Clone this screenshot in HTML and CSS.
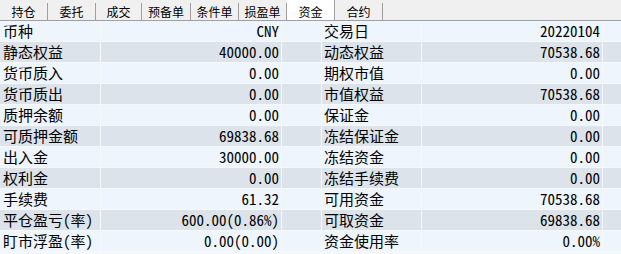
FILE: index.html
```html
<!DOCTYPE html>
<html lang="zh-CN">
<head>
<meta charset="UTF-8">
<title>资金</title>
<link rel="stylesheet" href="styles.css">
</head>
<body>

<!-- Tabs -->
<div class="tabs">
  <div class="tab">持仓</div>
  <div class="tab">委托</div>
  <div class="tab narrow">成交</div>
  <div class="tab wide">预备单</div>
  <div class="tab">条件单</div>
  <div class="tab">损盈单</div>
  <div class="tab active">资金</div>
  <div class="tab">合约</div>
</div>

<!-- Fund table -->
<div class="grid">
  <div class="row"><div class="lbl">币种</div><div class="val">CNY</div><div class="gap"></div><div class="lbl">交易日</div><div class="val">20220104</div><div class="rest"></div></div>
  <div class="row"><div class="lbl">静态权益</div><div class="val">40000.00</div><div class="gap"></div><div class="lbl">动态权益</div><div class="val">70538.68</div><div class="rest"></div></div>
  <div class="row"><div class="lbl">货币质入</div><div class="val">0.00</div><div class="gap"></div><div class="lbl">期权市值</div><div class="val">0.00</div><div class="rest"></div></div>
  <div class="row"><div class="lbl">货币质出</div><div class="val">0.00</div><div class="gap"></div><div class="lbl">市值权益</div><div class="val">70538.68</div><div class="rest"></div></div>
  <div class="row"><div class="lbl">质押余额</div><div class="val">0.00</div><div class="gap"></div><div class="lbl">保证金</div><div class="val">0.00</div><div class="rest"></div></div>
  <div class="row"><div class="lbl">可质押金额</div><div class="val">69838.68</div><div class="gap"></div><div class="lbl">冻结保证金</div><div class="val">0.00</div><div class="rest"></div></div>
  <div class="row"><div class="lbl">出入金</div><div class="val">30000.00</div><div class="gap"></div><div class="lbl">冻结资金</div><div class="val">0.00</div><div class="rest"></div></div>
  <div class="row"><div class="lbl">权利金</div><div class="val">0.00</div><div class="gap"></div><div class="lbl">冻结手续费</div><div class="val">0.00</div><div class="rest"></div></div>
  <div class="row"><div class="lbl">手续费</div><div class="val">61.32</div><div class="gap"></div><div class="lbl">可用资金</div><div class="val">70538.68</div><div class="rest"></div></div>
  <div class="row"><div class="lbl">平仓盈亏(率)</div><div class="val">600.00(0.86%)</div><div class="gap"></div><div class="lbl">可取资金</div><div class="val">69838.68</div><div class="rest"></div></div>
  <div class="row"><div class="lbl">盯市浮盈(率)</div><div class="val">0.00(0.00)</div><div class="gap"></div><div class="lbl">资金使用率</div><div class="val">0.00%</div><div class="rest"></div></div>
</div>

</body>
</html>
```

FILE: styles.css
```css
body {
  margin: 0;
  padding: 0;
  background: #f4f7fb;
  font-family: "Noto Sans Mono CJK SC", "Noto Sans CJK SC", monospace;
  color: #000;
  overflow: hidden;
}
.tabs {
  display: flex;
  height: 20px;
  background: #f0f0f0;
  border-bottom: 1px solid #a0a0a0;
}
.tab {
  width: 47px;
  margin-top: 3px;
  border-right: 1px solid #a0a0a0;
  font-size: 12px;
  line-height: 17px;
  text-align: center;
}
.tab.narrow {
  width: 45px;
}
.tab.wide {
  width: 48px;
}
.tab.active {
  background: #fff;
  margin-top: 0;
  padding-top: 3px;
}
.row {
  display: flex;
  height: 20px;
  border-bottom: 1px solid #f6f8fa;
  background: #eef5fc;
}
.row:nth-child(even) {
  background: #dce3eb;
}
.row div {
  border-right: 1px solid #f6f8fa;
  font-size: 15px;
  line-height: 20px;
  white-space: nowrap;
}
.lbl {
  width: 97px;
  padding-left: 3px;
}
.row .lbl + .val + .gap + .lbl {
  width: 97px;
  padding-left: 2px;
}
.val {
  width: 178px;
  padding-right: 2px;
  text-align: right;
}
.gap {
  width: 39px;
}
.row .rest {
  flex: 1;
  border-right: none;
}
```
